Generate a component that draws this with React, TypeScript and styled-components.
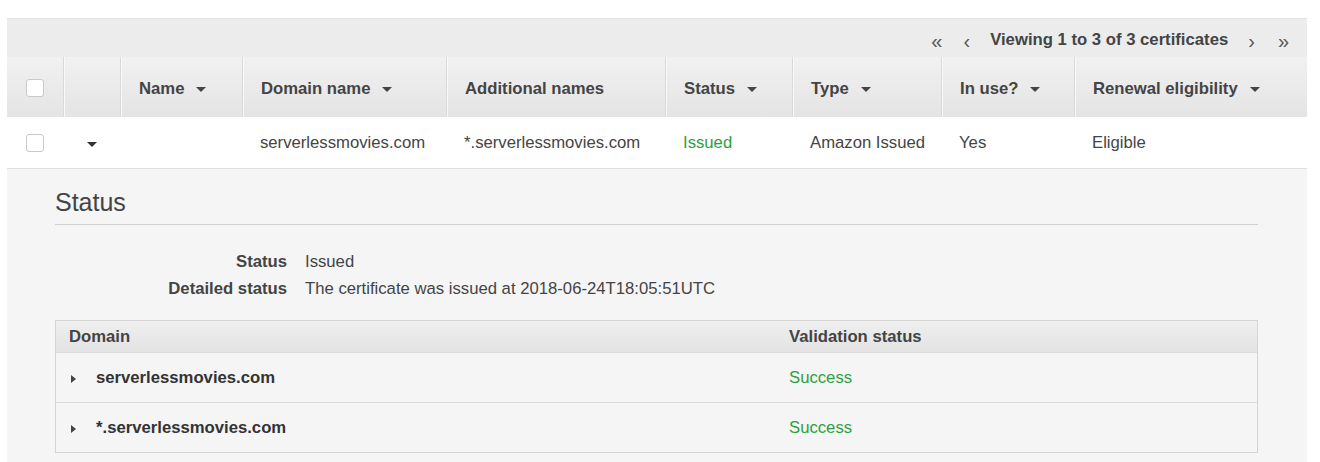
import React from 'react';
import styled, { createGlobalStyle } from 'styled-components';

const Global = createGlobalStyle`
  html, body { margin: 0; padding: 0; background: #fff; }
  body {
    font-family: "Liberation Sans", Arial, Helvetica, sans-serif;
    color: #444;
    font-size: 16.7px;
  }
`;

const COLS = '56px 57px 122px 204px 219px 127px 149px 133px 233px';

const Page = styled.div`
  padding: 18px 0 0 7px;
`;

const Table = styled.div`
  width: 1300px;
`;

const Pager = styled.div`
  height: 39px;
  box-sizing: border-box;
  padding-top: 3px;
  border-top: 1px solid #e2e2e2;
  background: #ececec;
  display: flex;
  justify-content: flex-end;
  align-items: center;
  padding-right: 18px;
  color: #555;
`;

const PagerArrow = styled.span<{ $gap: number }>`
  font-size: 20px;
  margin-left: ${(p) => p.$gap}px;
  color: #555;
  line-height: 1;
  margin-top: 2px;
`;

const PagerText = styled.span`
  font-weight: bold;
  color: #444;
  margin-left: 20px;
`;

const HeaderRow = styled.div`
  display: grid;
  grid-template-columns: ${COLS};
  height: 60px;
  background: linear-gradient(#f1f1f1, #e4e4e4);
`;

const HeaderCell = styled.div<{ $first?: boolean }>`
  display: flex;
  align-items: center;
  padding-left: 18px;
  padding-top: 3px;
  font-weight: bold;
  color: #444;
  white-space: nowrap;
  ${(p) => (p.$first ? '' : 'border-left: 1px solid #d9d9d9; box-shadow: inset 1px 0 0 #f9f9f9;')}
`;

const CenterCell = styled.div<{ $first?: boolean }>`
  display: flex;
  align-items: center;
  justify-content: center;
  padding-top: 2px;
  ${(p) => (p.$first ? '' : 'border-left: 1px solid #d9d9d9; box-shadow: inset 1px 0 0 #f9f9f9;')}
`;

const SortCaret = styled.span`
  display: inline-block;
  width: 0;
  height: 0;
  margin-left: 12px;
  margin-top: 2px;
  border-left: 5.5px solid transparent;
  border-right: 5.5px solid transparent;
  border-top: 5px solid #444;
`;

const Checkbox = styled.span`
  display: inline-block;
  width: 16px;
  height: 16px;
  border: 1px solid #c9c9c9;
  border-radius: 3px;
  background: #fff;
`;

const DataRow = styled.div`
  display: grid;
  grid-template-columns: ${COLS};
  height: 51px;
  background: #fff;
  border-bottom: 1px solid #e0e0e0;
  align-items: center;
`;

const DataCell = styled.div<{ $green?: boolean }>`
  padding-left: 18px;
  white-space: nowrap;
  color: ${(p) => (p.$green ? '#2ba141' : '#444')};
`;

const DataCenter = styled.div`
  display: flex;
  justify-content: center;
  align-items: center;
`;

const ExpandCaret = styled.span`
  display: inline-block;
  width: 0;
  height: 0;
  margin-top: 3px;
  border-left: 5.5px solid transparent;
  border-right: 5.5px solid transparent;
  border-top: 5px solid #333;
`;

const Expanded = styled.div`
  background: #f5f5f5;
  padding: 0 49px 20px 48px;
  height: 293px;
  box-sizing: border-box;
  overflow: hidden;
`;

const SectionTitle = styled.h2`
  margin: 19px 0 0;
  padding-bottom: 8px;
  font-size: 25px;
  line-height: 28px;
  font-weight: normal;
  color: #444;
  border-bottom: 1px solid #cfcfcf;
`;

const KVList = styled.div`
  display: grid;
  grid-template-columns: 232px 1fr;
  column-gap: 18px;
  margin-top: 23px;
  line-height: 27px;
`;

const KLabel = styled.div`
  text-align: right;
  font-weight: bold;
  color: #444;
`;

const KValue = styled.div`
  color: #444;
`;

const InnerTable = styled.div`
  margin-top: 18px;
  border: 1px solid #d4d4d4;
`;

const INNER_COLS = '720px 1fr';

const InnerHeader = styled.div`
  display: grid;
  grid-template-columns: ${INNER_COLS};
  height: 31px;
  align-items: center;
  background: linear-gradient(#efefef, #e3e3e3);
  font-weight: bold;
  color: #444;
`;

const InnerHeadCell = styled.div`
  padding-left: 13px;
`;

const InnerRow = styled.div`
  display: grid;
  grid-template-columns: ${INNER_COLS};
  height: 49px;
  align-items: center;
  background: #f5f5f5;
  border-top: 1px solid #dcdcdc;
`;

const DomainCell = styled.div`
  display: flex;
  align-items: center;
  padding-left: 15px;
  font-weight: bold;
  color: #333;
`;

const RightCaret = styled.span`
  display: inline-block;
  width: 0;
  height: 0;
  margin-right: 20px;
  margin-top: 2px;
  border-top: 4.5px solid transparent;
  border-bottom: 4.5px solid transparent;
  border-left: 5px solid #444;
`;

const SuccessCell = styled.div`
  padding-left: 13px;
  color: #2ba141;
`;

const headers = [
  { label: 'Name', sort: true },
  { label: 'Domain name', sort: true },
  { label: 'Additional names', sort: false },
  { label: 'Status', sort: true },
  { label: 'Type', sort: true },
  { label: 'In use?', sort: true },
  { label: 'Renewal eligibility', sort: true },
];

const domains = ['serverlessmovies.com', '*.serverlessmovies.com'];

export default function App() {
  return (
    <>
      <Global />
      <Page>
        <Table>
          <Pager>
            <PagerArrow $gap={0}>«</PagerArrow>
            <PagerArrow $gap={21}>‹</PagerArrow>
            <PagerText>Viewing 1 to 3 of 3 certificates</PagerText>
            <PagerArrow $gap={20}>›</PagerArrow>
            <PagerArrow $gap={23}>»</PagerArrow>
          </Pager>
          <HeaderRow>
            <CenterCell $first>
              <Checkbox />
            </CenterCell>
            <CenterCell />
            {headers.map((h) => (
              <HeaderCell key={h.label}>
                {h.label}
                {h.sort && <SortCaret />}
              </HeaderCell>
            ))}
          </HeaderRow>
          <DataRow>
            <DataCenter>
              <Checkbox />
            </DataCenter>
            <DataCenter>
              <ExpandCaret />
            </DataCenter>
            <DataCell />
            <DataCell>serverlessmovies.com</DataCell>
            <DataCell>*.serverlessmovies.com</DataCell>
            <DataCell $green>Issued</DataCell>
            <DataCell>Amazon Issued</DataCell>
            <DataCell>Yes</DataCell>
            <DataCell>Eligible</DataCell>
          </DataRow>
          <Expanded>
            <SectionTitle>Status</SectionTitle>
            <KVList>
              <KLabel>Status</KLabel>
              <KValue>Issued</KValue>
              <KLabel>Detailed status</KLabel>
              <KValue>The certificate was issued at 2018-06-24T18:05:51UTC</KValue>
            </KVList>
            <InnerTable>
              <InnerHeader>
                <InnerHeadCell>Domain</InnerHeadCell>
                <InnerHeadCell>Validation status</InnerHeadCell>
              </InnerHeader>
              {domains.map((d) => (
                <InnerRow key={d}>
                  <DomainCell>
                    <RightCaret />
                    {d}
                  </DomainCell>
                  <SuccessCell>Success</SuccessCell>
                </InnerRow>
              ))}
            </InnerTable>
          </Expanded>
        </Table>
      </Page>
    </>
  );
}
